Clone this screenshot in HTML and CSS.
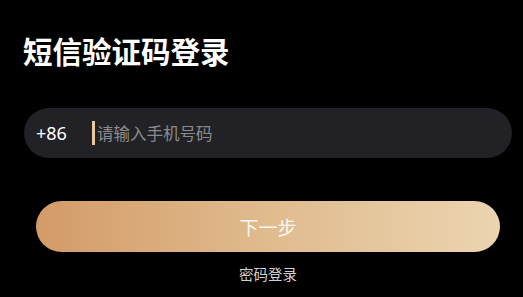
FILE: index.html
```html
<!DOCTYPE html>
<html lang="zh">
<head>
<meta charset="utf-8">
<link rel="stylesheet" href="styles.css">
</head>
<body>
<div class="page">
  <h1 class="title">短信验证码登录</h1>
  <div class="phone-field">
    <span class="prefix">+86</span>
    <span class="cursor"></span>
    <span class="placeholder">请输入手机号码</span>
  </div>
  <button class="next-btn">下一步</button>
  <div class="alt-link">密码登录</div>
</div>
</body>
</html>
```
FILE: styles.css
```css
html, body {
  margin: 0;
  padding: 0;
  background: #000;
}
.page {
  width: 523px;
  height: 297px;
  overflow: hidden;
  font-family: "Noto Sans CJK SC", "Noto Sans", sans-serif;
  display: flex;
  flex-direction: column;
}
.title {
  margin: 32px 0 0 23px;
  font-size: 29.5px;
  line-height: 36px;
  font-weight: 700;
  color: #fff;
}
.phone-field {
  margin: 40px 11px 0 24px;
  height: 50px;
  border-radius: 25px;
  background: #222226;
  display: flex;
  align-items: center;
  padding-left: 12px;
}
.prefix {
  font-family: "Noto Sans", "Noto Sans CJK SC", sans-serif;
  font-size: 18px;
  color: #fff;
  width: 56px;
}
.cursor {
  width: 3px;
  height: 24px;
  background: #e9c99b;
  margin-right: 2px;
}
.placeholder {
  font-size: 16.5px;
  color: #8a8a8e;
}
.next-btn {
  margin: 43px 23px 0 36px;
  height: 51px;
  border: none;
  border-radius: 26px;
  background: linear-gradient(90deg, #d39b68 0%, #e0bb8e 50%, #ebd4b0 100%);
  color: rgba(255,255,255,0.92);
  font-family: "Noto Sans CJK SC", sans-serif;
  font-size: 19px;
  padding: 0;
}
.alt-link {
  margin: 12px 0 0 0;
  padding-left: 36px;
  width: 464px;
  text-align: center;
  font-size: 14.5px;
  line-height: 20px;
  color: #d0d0d0;
}
```
